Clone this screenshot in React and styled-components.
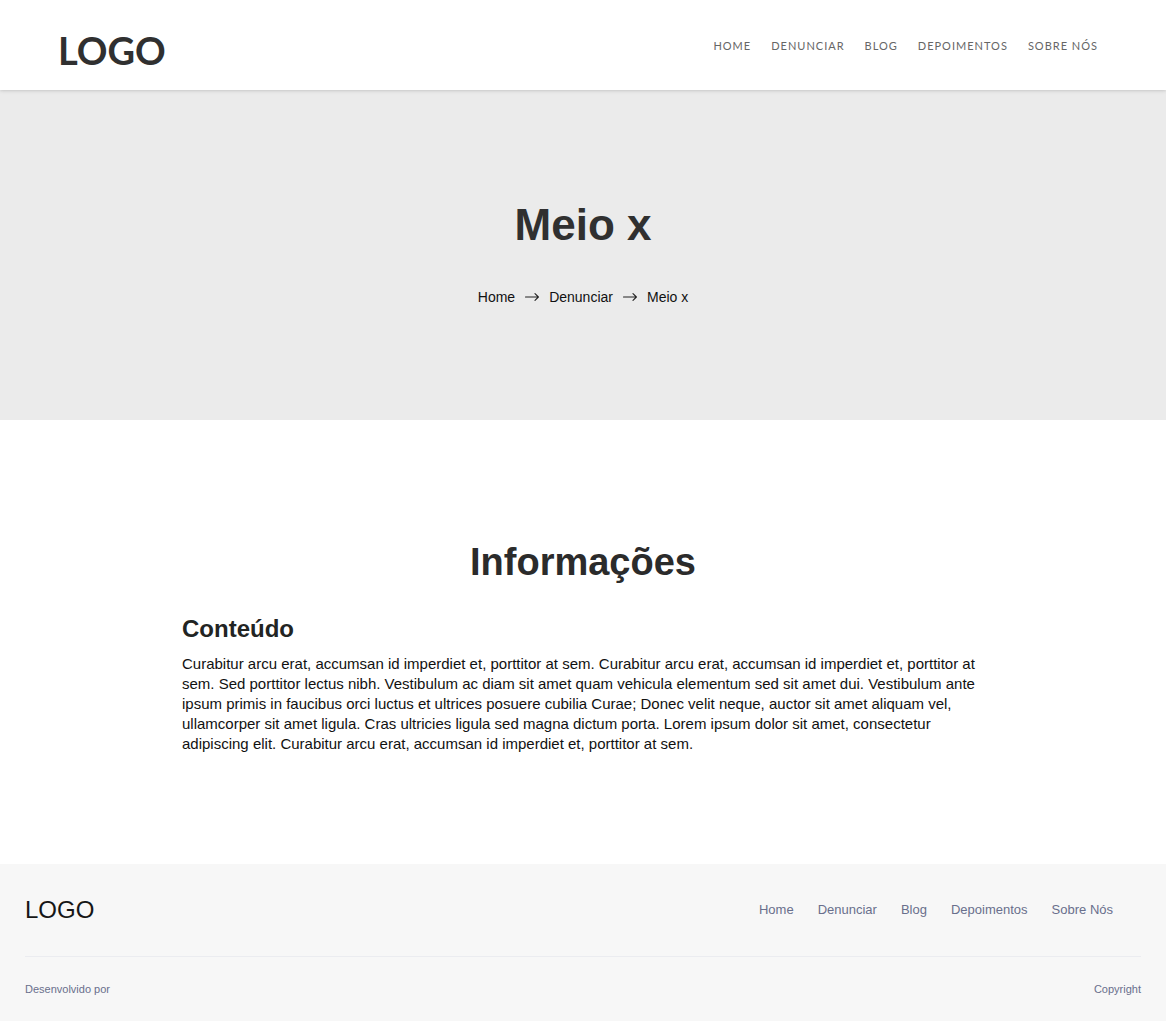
import React from "react";
import styled, { createGlobalStyle } from "styled-components";

const GlobalStyle = createGlobalStyle`
  *, *::before, *::after { box-sizing: border-box; }
  body {
    margin: 0;
    background: #fff;
    color: #111;
    font-family: "Liberation Sans", Arial, sans-serif;
  }
`;

const Header = styled.header`
  position: relative;
  display: flex;
  align-items: center;
  justify-content: space-between;
  height: 90px;
  padding: 0 68px 0 58px;
  background: #fff;
  box-shadow: 0 0 4px rgba(0, 0, 0, 0.25);
`;

const Brand = styled.a`
  padding-top: 10px;
  color: #303030;
  font: 700 38px/48px Lato, sans-serif;
  text-decoration: none;
`;

const MainNav = styled.nav`
  display: flex;
  gap: 20px;
  padding-top: 2px;
`;

const MainNavLink = styled.a`
  color: #666;
  font: 400 11px/16px Lato, sans-serif;
  letter-spacing: 1px;
  text-decoration: none;
  text-transform: uppercase;
`;

const Hero = styled.section`
  display: flex;
  flex-direction: column;
  align-items: center;
  padding: 108px 24px 112px;
  background: #ebebeb;
`;

const PageTitle = styled.h1`
  margin: 0 0 36px;
  color: #303030;
  font-size: 44px;
  line-height: 54px;
`;

const Crumbs = styled.nav`
  display: flex;
  align-items: center;
  gap: 10px;
  padding-bottom: 2px;
  font-size: 14px;
  line-height: 18px;
`;

const CrumbLink = styled.a`
  color: inherit;
  text-decoration: none;
`;

const Content = styled.main`
  max-width: 850px;
  margin: 0 auto;
  padding: 118px 24px 110px;
`;

const SectionTitle = styled.h2`
  margin: 0 0 28px;
  color: #2b2b2b;
  font-size: 38px;
  line-height: 48px;
  text-align: center;
`;

const Subtitle = styled.h3`
  margin: 0 0 10px;
  color: #222423;
  font-size: 24px;
  line-height: 30px;
`;

const Paragraph = styled.p`
  margin: 0;
  font-size: 15px;
  line-height: 20px;
`;

const Footer = styled.footer`
  padding: 24px 25px;
  background: #f7f7f7;
`;

const FooterTop = styled.div`
  display: flex;
  align-items: center;
  justify-content: space-between;
  padding: 0 28px 24px 0;
  border-bottom: 1px solid #ebecf0;
`;

const FooterBrand = styled.a`
  color: #161616;
  font-size: 24px;
  line-height: 44px;
  text-decoration: none;
`;

const FooterNav = styled.nav`
  display: flex;
  gap: 24px;
`;

const FooterLink = styled.a`
  color: #696f8c;
  font-size: 13px;
  line-height: 20px;
  text-decoration: none;
`;

const FooterBottom = styled.div`
  display: flex;
  justify-content: space-between;
  padding-top: 24px;
  color: #696f8c;
  font-size: 11px;
  line-height: 16px;
`;

const LINKS = ["Home", "Denunciar", "Blog", "Depoimentos", "Sobre Nós"];

const Arrow = () => (
  <svg
    width="14"
    height="8"
    viewBox="0 0 14 8"
    fill="none"
    stroke="#222"
    strokeWidth="1.1"
    strokeLinecap="round"
    strokeLinejoin="round"
    aria-hidden="true"
  >
    <path d="M.5 4h12.8M10 .7L13.4 4L10 7.3" />
  </svg>
);

export default function App() {
  return (
    <>
      <GlobalStyle />
      <Header>
        <Brand href="#">LOGO</Brand>
        <MainNav aria-label="Principal">
          {LINKS.map((label) => (
            <MainNavLink key={label} href="#">{label}</MainNavLink>
          ))}
        </MainNav>
      </Header>
      <Hero>
        <PageTitle>Meio x</PageTitle>
        <Crumbs aria-label="Trilha">
          <CrumbLink href="#">Home</CrumbLink>
          <Arrow />
          <CrumbLink href="#">Denunciar</CrumbLink>
          <Arrow />
          <span>Meio x</span>
        </Crumbs>
      </Hero>
      <Content>
        <SectionTitle>Informações</SectionTitle>
        <Subtitle>Conteúdo</Subtitle>
        <Paragraph>
          Curabitur arcu erat, accumsan id imperdiet et, porttitor at sem. Curabitur arcu erat, accumsan id
          imperdiet et, porttitor at sem. Sed porttitor lectus nibh. Vestibulum ac diam sit amet quam vehicula
          elementum sed sit amet dui. Vestibulum ante ipsum primis in faucibus orci luctus et ultrices posuere
          cubilia Curae; Donec velit neque, auctor sit amet aliquam vel, ullamcorper sit amet ligula. Cras
          ultricies ligula sed magna dictum porta. Lorem ipsum dolor sit amet, consectetur adipiscing elit.
          Curabitur arcu erat, accumsan id imperdiet et, porttitor at sem.
        </Paragraph>
      </Content>
      <Footer>
        <FooterTop>
          <FooterBrand href="#">LOGO</FooterBrand>
          <FooterNav aria-label="Rodapé">
            {LINKS.map((label) => (
              <FooterLink key={label} href="#">{label}</FooterLink>
            ))}
          </FooterNav>
        </FooterTop>
        <FooterBottom>
          <span>Desenvolvido por</span>
          <span>Copyright</span>
        </FooterBottom>
      </Footer>
    </>
  );
}
